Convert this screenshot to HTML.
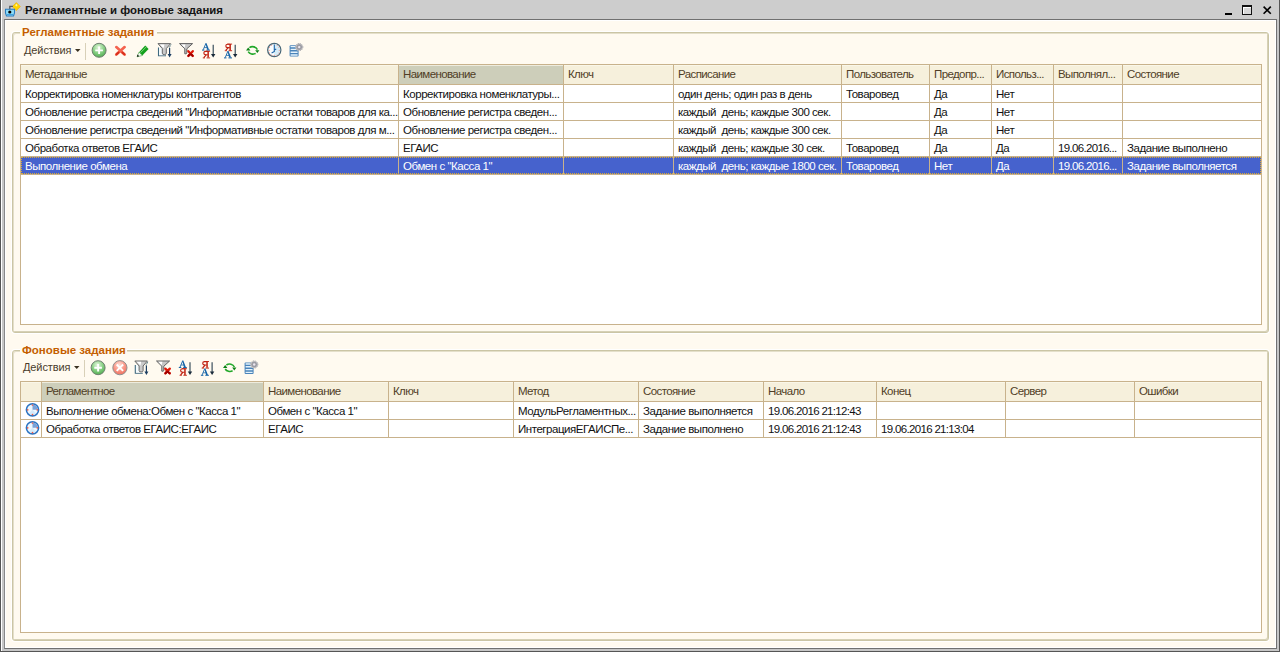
<!DOCTYPE html><html><head><meta charset="utf-8"><style>
html,body{margin:0;padding:0;}
body{width:1280px;height:652px;position:relative;overflow:hidden;background:#cdcdcd;font-family:"Liberation Sans", sans-serif;}
.t{position:absolute;white-space:pre;font-size:11.5px;line-height:13px;color:#111;letter-spacing:-0.45px;}
.h{position:absolute;white-space:pre;font-size:11.5px;line-height:13px;color:#503e26;letter-spacing:-0.6px;}
.p{position:absolute;white-space:pre;font-size:11px;line-height:13px;color:#111;}
</style></head><body>
<div style="position:absolute;left:0px;top:0px;width:1px;height:652px;background:#555555"></div>
<div style="position:absolute;left:1px;top:0px;width:1px;height:652px;background:#fff"></div>
<div style="position:absolute;left:2px;top:19px;width:2px;height:631px;background:#c6c6c6"></div>
<div style="position:absolute;left:1277px;top:19px;width:2px;height:631px;background:#c6c6c6"></div>
<div style="position:absolute;left:2px;top:649px;width:1276px;height:2px;background:#c6c6c6"></div>
<div style="position:absolute;left:1279px;top:0px;width:1px;height:652px;background:#555555"></div>
<div style="position:absolute;left:0px;top:651px;width:1280px;height:1px;background:#555555"></div>
<svg style="position:absolute;left:4px;top:1.5px" width="17" height="16" viewBox="0 0 17 16"><path d="M12.3 0.6L16.3 4.6L12.3 8.6L8.3 4.6Z" fill="#ffd400" stroke="#f0b000" stroke-width=".7"/><path d="M11.2 3.2L12.3 4.6L13.6 3.2L12.3 1.8Z" fill="#fff4a0"/>
<path d="M5.8 11.5V4.3H9" fill="none" stroke="#5a5a5a" stroke-width="1.3"/>
<path d="M1.5 7.2H10.5Q11 11 9.5 14H2.5Q1 11 1.5 7.2Z" fill="#8fdcf6" stroke="#2a7cc0" stroke-width="1.1"/>
<path d="M3 12.6H9" stroke="#3aa0e0" stroke-width="1"/>
<circle cx="5.8" cy="10" r="1.6" fill="#000"/></svg>
<div class="p" style="left:25px;top:4px;font-weight:bold;font-size:11.4px;letter-spacing:0;color:#141414">Регламентные и фоновые задания</div>
<div style="position:absolute;left:1225px;top:13px;width:7px;height:2px;background:#000"></div>
<div style="position:absolute;left:1242px;top:5px;width:10px;height:10px;box-sizing:border-box;border:1px solid #111;border-top-width:2px;background:#d8d8d8;box-shadow:inset 1px 1px 0 #fff"></div>
<svg style="position:absolute;left:1262px;top:5px" width="10" height="10" viewBox="0 0 10 10"><path d="M1.6 1.6L8.8 8.8M8.8 1.6L1.6 8.8" stroke="#000" stroke-width="1.6"/></svg>
<div style="position:absolute;left:4px;top:19px;width:1273px;height:630px;box-sizing:border-box;border:1px solid #707070;border-left-color:#888;background:#fffaf0;box-shadow:inset 1px 1px 0 #fff, inset -1px -1px 0 #fff"></div>
<div style="position:absolute;left:12px;top:32px;width:1257px;height:301px;box-sizing:border-box;border:1px solid #cbc5a5;border-radius:3px;box-shadow:inset 1px 1px 0 #e4dfca, inset -1px -1px 0 #d6d1b6, 0 0 0 1px #fff"></div>
<div style="position:absolute;left:20px;top:26px;width:137px;height:10px;background:#fffaf0"></div>
<div class="p" style="left:22px;top:26px;font-weight:bold;font-size:11.5px;letter-spacing:0;color:#c45e00">Регламентные задания</div>
<div style="position:absolute;left:12px;top:350px;width:1257px;height:291px;box-sizing:border-box;border:1px solid #cbc5a5;border-radius:3px;box-shadow:inset 1px 1px 0 #e4dfca, inset -1px -1px 0 #d6d1b6, 0 0 0 1px #fff"></div>
<div style="position:absolute;left:20px;top:344px;width:107px;height:10px;background:#fffaf0"></div>
<div class="p" style="left:22px;top:344px;font-weight:bold;font-size:11.5px;letter-spacing:0;color:#c45e00">Фоновые задания</div>
<div class="p" style="left:24px;top:44px;color:#4a3c2c;letter-spacing:-0.1px">Действия</div>
<svg style="position:absolute;left:75px;top:49px" width="6" height="4" viewBox="0 0 6 4"><path d="M0 0H5.5L2.75 3Z" fill="#3a3222"/></svg>
<div style="position:absolute;left:85px;top:43px;width:1px;height:17px;background:#d8d0b8"></div>
<svg style="position:absolute;left:0;top:0" width="320" height="70"><defs><radialGradient id="gp" cx="45%" cy="30%" r="75%"><stop offset="0" stop-color="#e4f6dc"/><stop offset=".5" stop-color="#8cd288"/><stop offset="1" stop-color="#4aa84a"/></radialGradient>
<radialGradient id="gr" cx="45%" cy="30%" r="75%"><stop offset="0" stop-color="#ffe0d8"/><stop offset=".5" stop-color="#fa9a8a"/><stop offset="1" stop-color="#ec6a5a"/></radialGradient></defs><g transform="translate(0,0)"><circle cx="99.1" cy="50.3" r="7" fill="url(#gp)" stroke="#6f7f70" stroke-width="1"/>
<path d="M99.1 46.6V54M95.3 50.4H102.9" stroke="#fff" stroke-width="1.9"/></g><g transform="translate(0,0)"><path d="M116.3 47.1L124.6 54.6M124.6 47.1L116.3 54.6" stroke="#f4624e" stroke-width="2.7" stroke-linecap="round"/>
<path d="M116.6 54.3L118.5 52.5M124.3 54.3L122.4 52.5" stroke="#d8301c" stroke-width="2" stroke-linecap="round"/></g><g transform="translate(0,0)"><path d="M139 52.2L145.2 45.6L148.6 48.9L142.3 55.5Z" fill="#14a01c"/>
<path d="M140.6 52.6L146.6 46.6" stroke="#80d880" stroke-width="1"/>
<path d="M139 52.2L142.3 55.5L137 56.8Z" fill="#fafafa" stroke="#209020" stroke-width=".5"/><path d="M137 56.8L137.6 54.6L139.2 56.2Z" fill="#000"/></g><g transform="translate(0,0)"><path d="M158.5 47.5V55.8H166" fill="none" stroke="#3f6a80" stroke-width="1.1"/><rect x="159.2" y="47.6" width="6" height="7.6" fill="#f4fbfe"/>
<path d="M158 43.6H170.6L166.3 48.6V53.2Q166.3 54.6 164.3 54.6Q162.3 54.6 162.3 53.2V48.6Z" fill="#cacaca" stroke="#6a6a6a" stroke-width="1"/>
<path d="M159.8 44.4H164.4L163.6 48.2Z" fill="#fff"/>
<path d="M169.6 48V55" stroke="#1c3e62" stroke-width="1.2"/><path d="M167.6 54H171.6L169.6 57.5Z" fill="#1c3e62"/>
<path d="M171 44.5L169.2 47.8" stroke="#3a6a78" stroke-width="1" stroke-dasharray="1 .6"/></g><g transform="translate(0,0)"><path d="M179.5 43.6H192.6L186.8 48.8V52.8Q186.8 53.8 186 53.8H184.8V48.8Z" fill="#c6c6c6" stroke="#626262" stroke-width="1"/>
<path d="M181.3 44.4H185.4L184.6 47.8Z" fill="#fff"/>
<path d="M188.3 51.2L192.8 56M192.8 51.2L188.3 56" stroke="#e01808" stroke-width="2.3" stroke-linecap="round"/>
<path d="M188.5 55.8L190 54.3M192.6 55.8L191.1 54.3" stroke="#a00000" stroke-width="2" stroke-linecap="round"/></g><g transform="translate(0,0)"><g transform="translate(202,43)" fill="none" stroke="#1664a8"><path d="M3.3 .2H4.5L7.1 6.8H5.2Z" fill="#1664a8" stroke="none"/><path d="M3.8 .6L1.2 6.8" stroke-width=".9"/><path d="M2.2 4.6H5.8" stroke-width=".8"/><path d="M0 7.1H2.5M4.4 7.1H8" stroke-width="1"/></g><g transform="translate(202.8,50.8)" fill="none" stroke="#c02010"><path d="M4.6 .3H6.1V6.8H4.6Z" fill="#c02010" stroke="none"/><path d="M5 .6H3Q1 .6 1 2.3Q1 4 3 4H5" stroke-width="1.1"/><path d="M3.4 4L1 6.8" stroke-width="1.2"/><path d="M2.4 .5H7.3M3.8 7.1H7.3M0 7.1H2.2" stroke-width=".9"/></g>
<path d="M213.2 44.8V55" stroke="#2a4050" stroke-width="1.1"/><path d="M211 54H215.4L213.2 57.6Z" fill="#1a2a3a"/></g><g transform="translate(22,0)"><g transform="translate(202.8,43.6)" fill="none" stroke="#c02010"><path d="M4.6 .3H6.1V6.8H4.6Z" fill="#c02010" stroke="none"/><path d="M5 .6H3Q1 .6 1 2.3Q1 4 3 4H5" stroke-width="1.1"/><path d="M3.4 4L1 6.8" stroke-width="1.2"/><path d="M2.4 .5H7.3M3.8 7.1H7.3M0 7.1H2.2" stroke-width=".9"/></g><g transform="translate(202,50.8)" fill="none" stroke="#1664a8"><path d="M3.3 .2H4.5L7.1 6.8H5.2Z" fill="#1664a8" stroke="none"/><path d="M3.8 .6L1.2 6.8" stroke-width=".9"/><path d="M2.2 4.6H5.8" stroke-width=".8"/><path d="M0 7.1H2.5M4.4 7.1H8" stroke-width="1"/></g>
<path d="M213.2 44.8V55" stroke="#2a4050" stroke-width="1.1"/><path d="M211 54H215.4L213.2 57.6Z" fill="#1a2a3a"/></g><g transform="translate(0,0)"><path d="M249.4 47.6A5.3 4.8 0 0 1 257.4 49.6" fill="none" stroke="#22a82a" stroke-width="1.6"/>
<path d="M255.6 53.4A5.3 4.8 0 0 1 248.2 51.6" fill="none" stroke="#22a82a" stroke-width="1.6"/>
<path d="M255.2 50.2H259.4L257.3 53Z" fill="#0a8214"/><path d="M246 50.6H250.4L248.2 47.6Z" fill="#0a8214"/></g><g transform="translate(0,0)"><circle cx="274.25" cy="50" r="6.6" fill="#f8fcff" stroke="#4a6878" stroke-width="1.3"/>
<path d="M274.25 50V44A6 6 0 0 1 280.25 50A6 6 0 0 1 274.25 56Z" fill="#d4ecf8"/>
<g fill="#f28a7a"><circle cx="271.3" cy="45.2" r=".55"/><circle cx="277.2" cy="45.2" r=".55"/><circle cx="269.5" cy="47.2" r=".55"/><circle cx="279" cy="47.2" r=".55"/><circle cx="269.2" cy="50.2" r=".55"/><circle cx="279.3" cy="50.2" r=".55"/><circle cx="269.5" cy="53" r=".55"/><circle cx="279" cy="53" r=".55"/><circle cx="271.3" cy="55" r=".55"/><circle cx="277.2" cy="55" r=".55"/><circle cx="274.25" cy="55.4" r=".55"/></g>
<path d="M274.3 44.6V52M274.3 51.5L271.6 53M274.3 50L276.2 49" fill="none" stroke="#1e64a8" stroke-width="1.1"/></g><g transform="translate(0,0)"><rect x="289.6" y="45.2" width="9" height="11.4" rx="1" fill="#4a84ba"/>
<path d="M290.6 46.6H296.2M290.6 49.4H297.6M290.6 52.2H297.6M290.6 55H297.6" stroke="#e4f2fb" stroke-width="1.4"/>
<circle cx="299.2" cy="47.1" r="3.5" fill="#9c9ca4" stroke="#fffaf0" stroke-width=".6"/>
<circle cx="299.2" cy="47.1" r="3.6" fill="none" stroke="#a0a0a8" stroke-width="1" stroke-dasharray="1.1 .8"/>
<circle cx="299.2" cy="47.1" r="1.2" fill="#ece6ee"/></g></svg>
<div class="p" style="left:23px;top:361px;color:#4a3c2c;letter-spacing:-0.1px">Действия</div>
<svg style="position:absolute;left:74px;top:366px" width="6" height="4" viewBox="0 0 6 4"><path d="M0 0H5.5L2.75 3Z" fill="#3a3222"/></svg>
<div style="position:absolute;left:84px;top:360px;width:1px;height:17px;background:#d8d0b8"></div>
<svg style="position:absolute;left:0;top:0" width="320" height="400"><g transform="translate(-1,317.4)"><circle cx="99.1" cy="50.3" r="7" fill="url(#gp)" stroke="#6f7f70" stroke-width="1"/>
<path d="M99.1 46.6V54M95.3 50.4H102.9" stroke="#fff" stroke-width="1.9"/></g><g transform="translate(0,317.4)"><circle cx="119.9" cy="50.3" r="7.1" fill="url(#gr)" stroke="#8f8f8f" stroke-width="1"/>
<path d="M116.7 47.1L123.1 53.5M123.1 47.1L116.7 53.5" stroke="#fff" stroke-width="1.9"/></g><g transform="translate(-23.2,317.4)"><path d="M158.5 47.5V55.8H166" fill="none" stroke="#3f6a80" stroke-width="1.1"/><rect x="159.2" y="47.6" width="6" height="7.6" fill="#f4fbfe"/>
<path d="M158 43.6H170.6L166.3 48.6V53.2Q166.3 54.6 164.3 54.6Q162.3 54.6 162.3 53.2V48.6Z" fill="#cacaca" stroke="#6a6a6a" stroke-width="1"/>
<path d="M159.8 44.4H164.4L163.6 48.2Z" fill="#fff"/>
<path d="M169.6 48V55" stroke="#1c3e62" stroke-width="1.2"/><path d="M167.6 54H171.6L169.6 57.5Z" fill="#1c3e62"/>
<path d="M171 44.5L169.2 47.8" stroke="#3a6a78" stroke-width="1" stroke-dasharray="1 .6"/></g><g transform="translate(-23,317.4)"><path d="M179.5 43.6H192.6L186.8 48.8V52.8Q186.8 53.8 186 53.8H184.8V48.8Z" fill="#c6c6c6" stroke="#626262" stroke-width="1"/>
<path d="M181.3 44.4H185.4L184.6 47.8Z" fill="#fff"/>
<path d="M188.3 51.2L192.8 56M192.8 51.2L188.3 56" stroke="#e01808" stroke-width="2.3" stroke-linecap="round"/>
<path d="M188.5 55.8L190 54.3M192.6 55.8L191.1 54.3" stroke="#a00000" stroke-width="2" stroke-linecap="round"/></g><g transform="translate(-23.2,317.4)"><g transform="translate(202,43)" fill="none" stroke="#1664a8"><path d="M3.3 .2H4.5L7.1 6.8H5.2Z" fill="#1664a8" stroke="none"/><path d="M3.8 .6L1.2 6.8" stroke-width=".9"/><path d="M2.2 4.6H5.8" stroke-width=".8"/><path d="M0 7.1H2.5M4.4 7.1H8" stroke-width="1"/></g><g transform="translate(202.8,50.8)" fill="none" stroke="#c02010"><path d="M4.6 .3H6.1V6.8H4.6Z" fill="#c02010" stroke="none"/><path d="M5 .6H3Q1 .6 1 2.3Q1 4 3 4H5" stroke-width="1.1"/><path d="M3.4 4L1 6.8" stroke-width="1.2"/><path d="M2.4 .5H7.3M3.8 7.1H7.3M0 7.1H2.2" stroke-width=".9"/></g>
<path d="M213.2 44.8V55" stroke="#2a4050" stroke-width="1.1"/><path d="M211 54H215.4L213.2 57.6Z" fill="#1a2a3a"/></g><g transform="translate(-1.1000000000000014,317.4)"><g transform="translate(202.8,43.6)" fill="none" stroke="#c02010"><path d="M4.6 .3H6.1V6.8H4.6Z" fill="#c02010" stroke="none"/><path d="M5 .6H3Q1 .6 1 2.3Q1 4 3 4H5" stroke-width="1.1"/><path d="M3.4 4L1 6.8" stroke-width="1.2"/><path d="M2.4 .5H7.3M3.8 7.1H7.3M0 7.1H2.2" stroke-width=".9"/></g><g transform="translate(202,50.8)" fill="none" stroke="#1664a8"><path d="M3.3 .2H4.5L7.1 6.8H5.2Z" fill="#1664a8" stroke="none"/><path d="M3.8 .6L1.2 6.8" stroke-width=".9"/><path d="M2.2 4.6H5.8" stroke-width=".8"/><path d="M0 7.1H2.5M4.4 7.1H8" stroke-width="1"/></g>
<path d="M213.2 44.8V55" stroke="#2a4050" stroke-width="1.1"/><path d="M211 54H215.4L213.2 57.6Z" fill="#1a2a3a"/></g><g transform="translate(-23,317.4)"><path d="M249.4 47.6A5.3 4.8 0 0 1 257.4 49.6" fill="none" stroke="#22a82a" stroke-width="1.6"/>
<path d="M255.6 53.4A5.3 4.8 0 0 1 248.2 51.6" fill="none" stroke="#22a82a" stroke-width="1.6"/>
<path d="M255.2 50.2H259.4L257.3 53Z" fill="#0a8214"/><path d="M246 50.6H250.4L248.2 47.6Z" fill="#0a8214"/></g><g transform="translate(-45,317.4)"><rect x="289.6" y="45.2" width="9" height="11.4" rx="1" fill="#4a84ba"/>
<path d="M290.6 46.6H296.2M290.6 49.4H297.6M290.6 52.2H297.6M290.6 55H297.6" stroke="#e4f2fb" stroke-width="1.4"/>
<circle cx="299.2" cy="47.1" r="3.5" fill="#9c9ca4" stroke="#fffaf0" stroke-width=".6"/>
<circle cx="299.2" cy="47.1" r="3.6" fill="none" stroke="#a0a0a8" stroke-width="1" stroke-dasharray="1.1 .8"/>
<circle cx="299.2" cy="47.1" r="1.2" fill="#ece6ee"/></g></svg>
<div style="position:absolute;left:20px;top:64px;width:1242px;height:261px;box-sizing:border-box;border:1px solid #c8b28c;background:#fff"></div>
<div style="position:absolute;left:21px;top:65px;width:1240px;height:19px;background:#f6f0dc"></div>
<div style="position:absolute;left:399px;top:65px;width:164px;height:19px;background:#cdceba"></div>
<div style="position:absolute;left:20px;top:84px;width:1242px;height:1px;background:#c8b28c"></div>
<div style="position:absolute;left:21px;top:65px;width:1240px;height:1px;background:#fcf9ee;opacity:.7"></div>
<div class="h" style="left:25px;top:68px;">Метаданные</div>
<div class="h" style="left:403px;top:68px;">Наименование</div>
<div class="h" style="left:568px;top:68px;">Ключ</div>
<div class="h" style="left:678px;top:68px;">Расписание</div>
<div class="h" style="left:846px;top:68px;">Пользователь</div>
<div class="h" style="left:934px;top:68px;">Предопр...</div>
<div class="h" style="left:996px;top:68px;">Использ...</div>
<div class="h" style="left:1058px;top:68px;">Выполнял...</div>
<div class="h" style="left:1127px;top:68px;">Состояние</div>
<div class="t" style="left:25px;top:88px;">Корректировка номенклатуры контрагентов</div>
<div class="t" style="left:403px;top:88px;">Корректировка номенклатуры...</div>
<div class="t" style="left:678px;top:88px;">один день; один раз в день</div>
<div class="t" style="left:846px;top:88px;">Товаровед</div>
<div class="t" style="left:934px;top:88px;">Да</div>
<div class="t" style="left:996px;top:88px;">Нет</div>
<div style="position:absolute;left:20px;top:102px;width:1242px;height:1px;background:#c8b28c"></div>
<div class="t" style="left:25px;top:106px;">Обновление регистра сведений "Информативные остатки товаров для ка...</div>
<div class="t" style="left:403px;top:106px;">Обновление регистра сведен...</div>
<div class="t" style="left:678px;top:106px;">каждый  день; каждые 300 сек.</div>
<div class="t" style="left:934px;top:106px;">Да</div>
<div class="t" style="left:996px;top:106px;">Нет</div>
<div style="position:absolute;left:20px;top:120px;width:1242px;height:1px;background:#c8b28c"></div>
<div class="t" style="left:25px;top:124px;">Обновление регистра сведений "Информативные остатки товаров для м...</div>
<div class="t" style="left:403px;top:124px;">Обновление регистра сведен...</div>
<div class="t" style="left:678px;top:124px;">каждый  день; каждые 300 сек.</div>
<div class="t" style="left:934px;top:124px;">Да</div>
<div class="t" style="left:996px;top:124px;">Нет</div>
<div style="position:absolute;left:20px;top:138px;width:1242px;height:1px;background:#c8b28c"></div>
<div class="t" style="left:25px;top:142px;">Обработка ответов ЕГАИС</div>
<div class="t" style="left:403px;top:142px;">ЕГАИС</div>
<div class="t" style="left:678px;top:142px;">каждый  день; каждые 30 сек.</div>
<div class="t" style="left:846px;top:142px;">Товаровед</div>
<div class="t" style="left:934px;top:142px;">Да</div>
<div class="t" style="left:996px;top:142px;">Да</div>
<div class="t" style="left:1058px;top:142px;letter-spacing:-0.67px;">19.06.2016...</div>
<div class="t" style="left:1127px;top:142px;">Задание выполнено</div>
<div style="position:absolute;left:20px;top:156px;width:1242px;height:1px;background:#c8b28c"></div>
<div style="position:absolute;left:21px;top:157px;width:1240px;height:17px;background:#4662cd"></div>
<div style="position:absolute;left:21px;top:157px;width:1240px;height:17px;box-sizing:border-box;border:1px dotted #d8a838;z-index:1"></div>
<div class="t" style="left:25px;top:160px;color:#fff;-webkit-text-stroke:0;">Выполнение обмена</div>
<div class="t" style="left:403px;top:160px;color:#fff;-webkit-text-stroke:0;">Обмен с "Касса 1"</div>
<div class="t" style="left:678px;top:160px;color:#fff;-webkit-text-stroke:0;">каждый  день; каждые 1800 сек.</div>
<div class="t" style="left:846px;top:160px;color:#fff;-webkit-text-stroke:0;">Товаровед</div>
<div class="t" style="left:934px;top:160px;color:#fff;-webkit-text-stroke:0;">Нет</div>
<div class="t" style="left:996px;top:160px;color:#fff;-webkit-text-stroke:0;">Да</div>
<div class="t" style="left:1058px;top:160px;color:#fff;-webkit-text-stroke:0;letter-spacing:-0.67px;">19.06.2016...</div>
<div class="t" style="left:1127px;top:160px;color:#fff;-webkit-text-stroke:0;">Задание выполняется</div>
<div style="position:absolute;left:20px;top:174px;width:1242px;height:1px;background:#c8b28c"></div>
<div style="position:absolute;left:398px;top:64px;width:1px;height:110px;background:#c8b28c"></div>
<div style="position:absolute;left:563px;top:64px;width:1px;height:110px;background:#c8b28c"></div>
<div style="position:absolute;left:673px;top:64px;width:1px;height:110px;background:#c8b28c"></div>
<div style="position:absolute;left:841px;top:64px;width:1px;height:110px;background:#c8b28c"></div>
<div style="position:absolute;left:929px;top:64px;width:1px;height:110px;background:#c8b28c"></div>
<div style="position:absolute;left:991px;top:64px;width:1px;height:110px;background:#c8b28c"></div>
<div style="position:absolute;left:1053px;top:64px;width:1px;height:110px;background:#c8b28c"></div>
<div style="position:absolute;left:1122px;top:64px;width:1px;height:110px;background:#c8b28c"></div>
<div style="position:absolute;left:20px;top:381px;width:1242px;height:252px;box-sizing:border-box;border:1px solid #c8b28c;background:#fff"></div>
<div style="position:absolute;left:21px;top:382px;width:1240px;height:19px;background:#f6f0dc"></div>
<div style="position:absolute;left:42px;top:382px;width:221px;height:19px;background:#cdceba"></div>
<div style="position:absolute;left:20px;top:401px;width:1242px;height:1px;background:#c8b28c"></div>
<div style="position:absolute;left:21px;top:382px;width:1240px;height:1px;background:#fcf9ee;opacity:.7"></div>
<div class="h" style="left:46px;top:385px;">Регламентное</div>
<div class="h" style="left:268px;top:385px;">Наименование</div>
<div class="h" style="left:393px;top:385px;">Ключ</div>
<div class="h" style="left:518px;top:385px;">Метод</div>
<div class="h" style="left:643px;top:385px;">Состояние</div>
<div class="h" style="left:768px;top:385px;">Начало</div>
<div class="h" style="left:881px;top:385px;">Конец</div>
<div class="h" style="left:1010px;top:385px;">Сервер</div>
<div class="h" style="left:1139px;top:385px;">Ошибки</div>
<div class="t" style="left:46px;top:405px;">Выполнение обмена:Обмен с "Касса 1"</div>
<div class="t" style="left:268px;top:405px;">Обмен с "Касса 1"</div>
<div class="t" style="left:518px;top:405px;">МодульРегламентных...</div>
<div class="t" style="left:643px;top:405px;">Задание выполняется</div>
<div class="t" style="left:768px;top:405px;letter-spacing:-0.67px;">19.06.2016 21:12:43</div>
<div style="position:absolute;left:20px;top:419px;width:1242px;height:1px;background:#c8b28c"></div>
<div class="t" style="left:46px;top:423px;">Обработка ответов ЕГАИС:ЕГАИС</div>
<div class="t" style="left:268px;top:423px;">ЕГАИС</div>
<div class="t" style="left:518px;top:423px;">ИнтеграцияЕГАИСПе...</div>
<div class="t" style="left:643px;top:423px;">Задание выполнено</div>
<div class="t" style="left:768px;top:423px;letter-spacing:-0.67px;">19.06.2016 21:12:43</div>
<div class="t" style="left:881px;top:423px;letter-spacing:-0.67px;">19.06.2016 21:13:04</div>
<div style="position:absolute;left:20px;top:437px;width:1242px;height:1px;background:#c8b28c"></div>
<div style="position:absolute;left:41px;top:381px;width:1px;height:56px;background:#c8b28c"></div>
<div style="position:absolute;left:263px;top:381px;width:1px;height:56px;background:#c8b28c"></div>
<div style="position:absolute;left:388px;top:381px;width:1px;height:56px;background:#c8b28c"></div>
<div style="position:absolute;left:513px;top:381px;width:1px;height:56px;background:#c8b28c"></div>
<div style="position:absolute;left:638px;top:381px;width:1px;height:56px;background:#c8b28c"></div>
<div style="position:absolute;left:763px;top:381px;width:1px;height:56px;background:#c8b28c"></div>
<div style="position:absolute;left:876px;top:381px;width:1px;height:56px;background:#c8b28c"></div>
<div style="position:absolute;left:1005px;top:381px;width:1px;height:56px;background:#c8b28c"></div>
<div style="position:absolute;left:1134px;top:381px;width:1px;height:56px;background:#c8b28c"></div>
<svg style="position:absolute;left:25px;top:402px" width="15" height="15" viewBox="0 0 15 15"><circle cx="7.5" cy="7.8" r="6.1" fill="#eef7fe" stroke="#2c74c2" stroke-width="1.6"/>
<path d="M7.5 7.8V2.6A5.2 5.2 0 0 1 12.7 7.8Z" fill="#7aa2d8"/><path d="M7.5 7.8L3.8 11.5A5.2 5.2 0 0 0 11.2 11.5Z" fill="#d4eafa"/>
<g fill="#f05a48"><circle cx="7.5" cy="3" r=".85"/><circle cx="7.5" cy="12.6" r=".85"/><circle cx="2.7" cy="7.8" r=".85"/><circle cx="12.3" cy="7.8" r=".85"/></g></svg>
<svg style="position:absolute;left:25px;top:420px" width="15" height="15" viewBox="0 0 15 15"><circle cx="7.5" cy="7.8" r="6.1" fill="#eef7fe" stroke="#2c74c2" stroke-width="1.6"/>
<path d="M7.5 7.8V2.6A5.2 5.2 0 0 1 12.7 7.8Z" fill="#7aa2d8"/><path d="M7.5 7.8L3.8 11.5A5.2 5.2 0 0 0 11.2 11.5Z" fill="#d4eafa"/>
<g fill="#f05a48"><circle cx="7.5" cy="3" r=".85"/><circle cx="7.5" cy="12.6" r=".85"/><circle cx="2.7" cy="7.8" r=".85"/><circle cx="12.3" cy="7.8" r=".85"/></g></svg>
</body></html>
